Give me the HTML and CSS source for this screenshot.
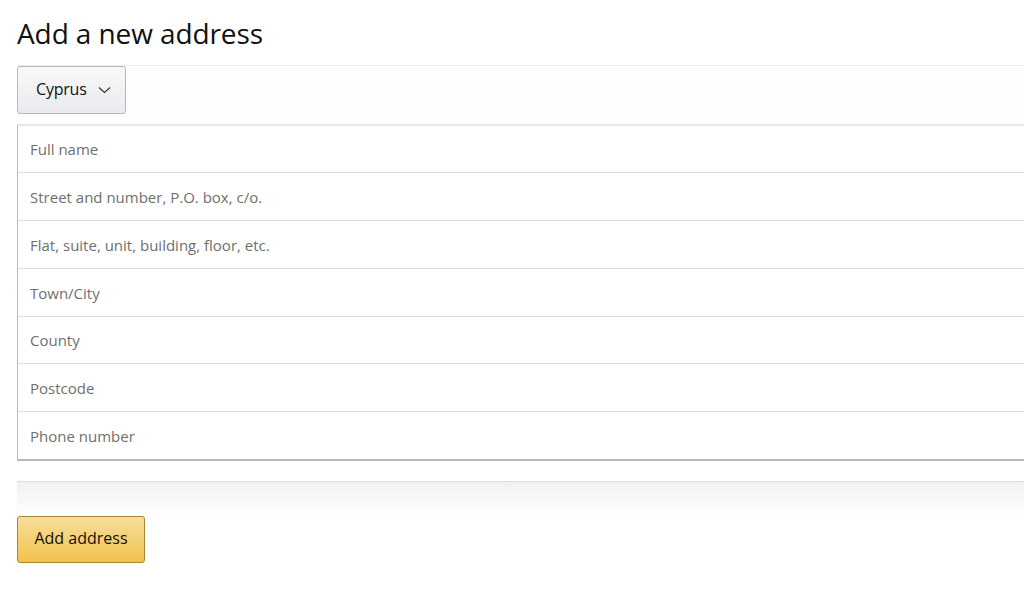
FILE: index.html
```html
<!DOCTYPE html>
<html>
<head>
<meta charset="utf-8">
<link rel="stylesheet" href="styles.css">
</head>
<body>
<div class="page">
  <h1 class="title">Add a new address</h1>
  <div class="country-row">
    <button class="country-select">
      <span>Cyprus</span>
      <svg class="chev" width="13" height="8" viewBox="0 0 13 8"><path d="M1 1.5 L6.5 6.5 L12 1.5" fill="none" stroke="#333" stroke-width="1.1"/></svg>
    </button>
  </div>
  <div class="fields">
    <div class="field">Full name</div>
    <div class="field">Street and number, P.O. box, c/o.</div>
    <div class="field">Flat, suite, unit, building, floor, etc.</div>
    <div class="field">Town/City</div>
    <div class="field">County</div>
    <div class="field">Postcode</div>
    <div class="field">Phone number</div>
  </div>
  <div class="divider"></div>
  <button class="submit">Add address</button>
</div>
</body>
</html>
```
FILE: styles.css
```css
html, body {
  margin: 0;
  padding: 0;
  background: #fff;
}
body {
  font-family: "Open Sans", "Noto Sans", Arial, sans-serif;
  color: #111;
}
.page {
  padding: 13px 0 0 17px;
}
.title {
  margin: 0;
  font-size: 28px;
  font-weight: 400;
  line-height: 40px;
  letter-spacing: -0.1px;
  color: #111;
  height: 52px;
}
.country-row {
  border-top: 1px solid #eeeeee;
  background: #fdfdfd;
  height: 58px;
}
.country-select {
  display: flex;
  align-items: center;
  gap: 11px;
  box-sizing: border-box;
  width: 109px;
  height: 48px;
  margin: 0;
  padding: 0 0 2px 18px;
  border: 1px solid #b5b8be;
  border-radius: 3px;
  background: linear-gradient(#f8f9fa, #e8eaed);
  font-family: inherit;
  font-size: 16px;
  letter-spacing: -0.2px;
  color: #111;
}
.chev {
  margin-top: 2px;
}
.fields {
  border-top: 2px solid #e8e8e8;
  border-left: 1px solid #bbb;
  border-bottom: 2px solid #b8b8b8;
}
.field {
  box-sizing: border-box;
  height: 48px;
  padding-left: 12px;
  display: flex;
  align-items: center;
  font-size: 15px;
  color: #6f6f6f;
  border-top: 1px solid #dcdcdc;
}
.field:first-child {
  border-top: none;
  height: 46px;
}
.field:nth-child(5) {
  height: 47px;
}
.divider {
  margin-top: 20px;
  height: 34px;
  border-top: 1px solid #dddddd;
  background: linear-gradient(#f1f1f2, #ffffff);
}
.submit {
  box-sizing: border-box;
  width: 128px;
  height: 47px;
  margin: 0;
  padding: 0 0 3px;
  border: 1px solid #a88734;
  border-radius: 3px;
  background: linear-gradient(#f8dd9c, #f1c34c);
  font-family: inherit;
  font-size: 16px;
  color: #111;
}
```
